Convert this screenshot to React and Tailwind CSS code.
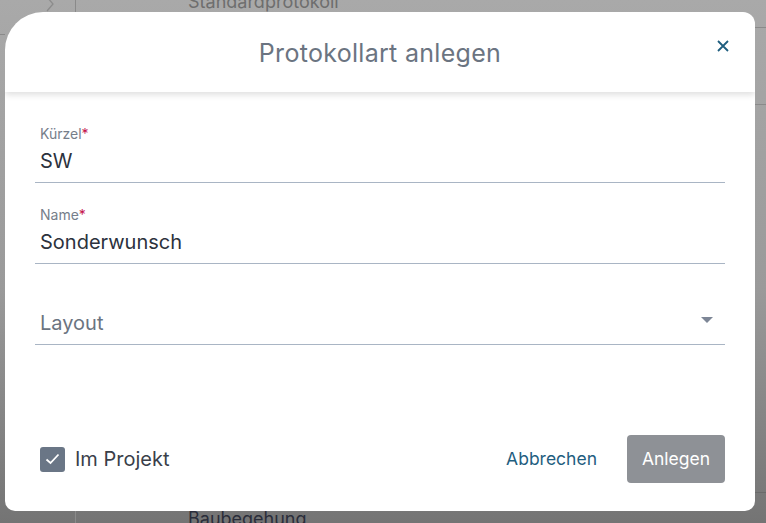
import React from "react";

export default function App() {
  return (
    <div className="relative w-[766px] h-[523px] overflow-hidden bg-[linear-gradient(180deg,#a9a9a9_0%,#9a9a9a_55%,#747474_100%)]" style={{ fontFamily: "Inter, 'Noto Sans', sans-serif" }}>
      {/* underlying page hints */}
      <div className="absolute left-0 top-0 w-full h-full pointer-events-none">
        <div className="absolute left-[75px] top-0 w-px h-full bg-[#8a8a8a]" />
        <div className="absolute left-0 top-[34px] w-[5px] h-px bg-[#8a8a8a]" />
        <div className="absolute left-[755px] top-[27px] w-[11px] h-px bg-[#8a8a8a]" />
        <div className="absolute left-[755px] top-[104px] w-[11px] h-px bg-[#8a8a8a]" />
        <div className="absolute left-[755px] top-[492px] w-[11px] h-px bg-[#6a6a6a]" />
        <svg className="absolute left-[44px] top-[-4px]" width="12" height="16" viewBox="0 0 12 16">
          <path d="M3 1 L9 8 L3 15" fill="none" stroke="#8c8c8c" strokeWidth="1.3" />
        </svg>
        <div className="absolute left-[188px] top-[-12px] text-[18px] text-[#6e6e6e]">Standardprotokoll</div>
        <div className="absolute left-[188px] top-[505px] text-[18px] text-[#2a2d3a]">Baubegehung</div>
      </div>

      {/* dialog */}
      <div className="absolute left-[5px] top-[12px] w-[750px] h-[499px] bg-white rounded-tl-[38px] rounded-tr-[12px] rounded-b-[10px] flex flex-col overflow-hidden">
        <div className="relative h-[80px] pt-[3px] flex items-center justify-center shadow-[0_3px_6px_rgba(0,0,0,0.12)] z-10 shrink-0">
          <span className="text-[25px] text-[#6b7481] tracking-[0.3px]">Protokollart anlegen</span>
          <svg className="absolute right-[26px] top-[28px]" width="12" height="12" viewBox="0 0 12 12">
            <path d="M1 1 L11 11 M11 1 L1 11" stroke="#1f5e7f" strokeWidth="1.8" />
          </svg>
        </div>

        <div className="flex-1 flex flex-col px-[30px] pt-[33px]">
          <div className="border-b border-[#a9b5c4] pl-[5px] pb-[8px]">
            <div className="text-[14px] leading-[18px] text-[#767e8a]">Kürzel<span className="text-[#c4124c]">*</span></div>
            <div className="text-[20px] leading-[26px] mt-[5px] text-[#2c323d]">SW</div>
          </div>
          <div className="border-b border-[#a9b5c4] pl-[5px] pb-[8px] mt-[23px]">
            <div className="text-[14px] leading-[18px] text-[#767e8a]">Name<span className="text-[#c4124c]">*</span></div>
            <div className="text-[20px] leading-[26px] mt-[5px] text-[#2c323d]">Sonderwunsch</div>
          </div>
          <div className="border-b border-[#a9b5c4] pl-[5px] pr-[12px] pb-[8px] mt-[46px] flex items-center justify-between">
            <div className="text-[20px] leading-[26px] text-[#6b7481]">Layout</div>
            <svg width="12" height="7" viewBox="0 0 12 7" className="mb-[5px]">
              <path d="M0 0 L12 0 L6 6 Z" fill="#7d8696" />
            </svg>
          </div>

          <div className="mt-auto mb-[28px] flex items-center">
            <div className="ml-[5px] w-[25px] h-[25px] rounded-[3px] bg-[#6a7686] flex items-center justify-center">
              <svg width="15" height="12" viewBox="0 0 15 12">
                <path d="M1.5 6.5 L5.5 10 L13.5 1.5" fill="none" stroke="white" strokeWidth="1.8" />
              </svg>
            </div>
            <span className="ml-[10px] text-[20px] text-[#3a3f4a]">Im Projekt</span>
            <span className="ml-auto mr-[30px] text-[17.5px] text-[#1f5e7f]">Abbrechen</span>
            <div className="w-[98px] h-[48px] rounded-[4px] bg-[#8e9196] flex items-center justify-center text-white text-[17.5px]">Anlegen</div>
          </div>
        </div>
      </div>
    </div>
  );
}
